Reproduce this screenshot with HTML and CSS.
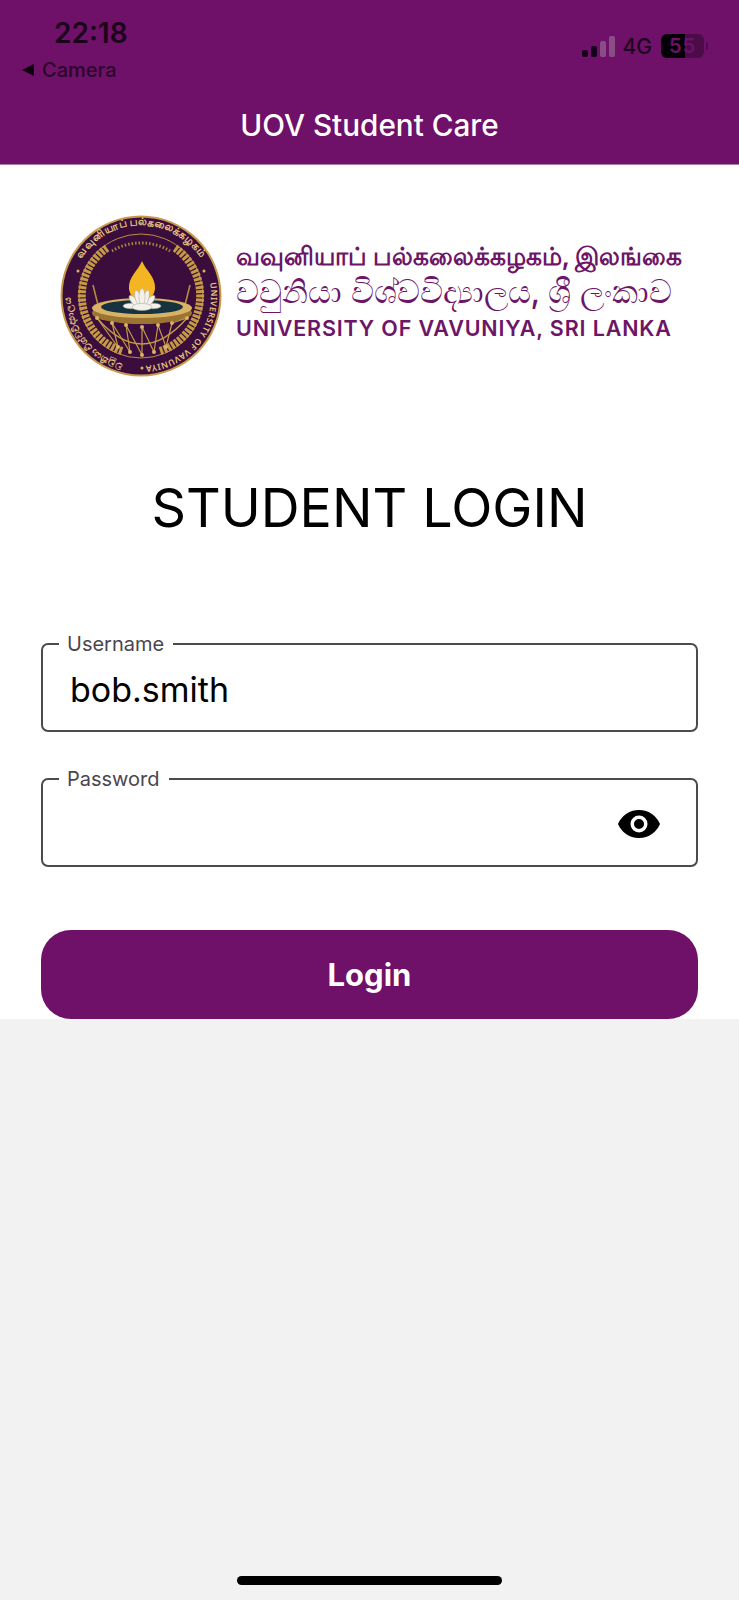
FILE: index.html
```html
<!DOCTYPE html>
<html lang="en">
<head>
<meta charset="utf-8">
<title>UOV Student Care</title>
<link rel="stylesheet" href="styles.css">
</head>
<body>
<header class="app-header">
  <div class="status-bar">
    <div class="status-left">
      <div class="clock">22:18</div>
      <div class="back-link"><span class="back-arrow"></span><span>Camera</span></div>
    </div>
    <div class="status-right">
      <span class="signal"><i class="bar bar-1"></i><i class="bar bar-2"></i><i class="bar bar-3"></i><i class="bar bar-4"></i></span>
      <span class="network">4G</span>
      <span class="battery"><span class="battery-level">55</span></span>
      <span class="battery-cap"></span>
    </div>
  </div>
  <h1 class="app-title">UOV Student Care</h1>
</header>
<main class="login">
  <div class="brand">
    <svg class="seal" viewBox="0 0 162 162" aria-hidden="true">
      <defs>
        <path id="ring-top" d="M 15 57 A 70 70 0 0 1 147 57"/>
        <path id="ring-right" d="M 149 64 A 70 70 0 0 1 81 151"/>
        <path id="ring-left" d="M 81 151 A 70 70 0 0 1 13 64"/>
      </defs>
      <circle cx="81" cy="81" r="80.500" fill="#c89a4b"/>
      <circle cx="81" cy="81" r="78.500" fill="#3a0d3d"/>
      <circle cx="81" cy="81" r="62" fill="none" stroke="#b98f45" stroke-width="1"/>
      <text class="seal-text"><textPath href="#ring-top" startOffset="50%" text-anchor="middle">வவுனியாப் பல்கலைக்கழகம்</textPath></text>
      <text class="seal-text seal-latin"><textPath href="#ring-right" startOffset="50%" text-anchor="middle">UNIVERSITY OF VAVUNIYA</textPath></text>
      <text class="seal-text seal-sinhala"><textPath href="#ring-left" startOffset="50%" text-anchor="middle">වවුනියා විශ්වවිද්‍යාලය</textPath></text>
      <circle cx="18" cy="56" r="1.500" fill="#d9b45f"/><circle cx="144" cy="56" r="1.500" fill="#d9b45f"/><circle cx="82" cy="153" r="1.500" fill="#d9b45f"/>
      <path d="M 52 36 A 56 56 0 0 1 110 36" fill="none" stroke="#a9853f" stroke-width="3" stroke-dasharray="1.500 2"/>
      <path d="M 47 33 A 58 58 0 0 0 62 136" fill="none" stroke="#c49a45" stroke-width="8" stroke-dasharray="3 1.200"/>
      <path d="M 115 33 A 58 58 0 0 1 100 136" fill="none" stroke="#c49a45" stroke-width="8" stroke-dasharray="3 1.200"/>
      <path d="M 33 70 L 38 90 M 130 70 L 125 90" stroke="#b58a3c" stroke-width="1.600"/>
      <path d="M 82 46 C 78 56 68 62 69 74 C 70 82 76 86 82 86 C 88 86 94 82 95 74 C 96 62 86 56 82 46 Z" fill="#f3b521"/>
      <ellipse cx="82" cy="98" rx="50" ry="11" fill="#9c7431"/>
      <ellipse cx="82" cy="93" rx="50" ry="10" fill="#d7b267"/>
      <ellipse cx="82" cy="92" rx="41" ry="7" fill="#16343f"/>
      <g fill="#f4f1ea" stroke="#a7a59c" stroke-width=".5">
        <ellipse cx="71" cy="91" rx="8" ry="2.800"/>
        <ellipse cx="93" cy="91" rx="8" ry="2.800"/>
        <ellipse cx="74" cy="86" rx="2.800" ry="7" transform="rotate(-40 74 86)"/>
        <ellipse cx="90" cy="86" rx="2.800" ry="7" transform="rotate(40 90 86)"/>
        <ellipse cx="78" cy="83" rx="2.800" ry="8" transform="rotate(-15 78 83)"/>
        <ellipse cx="86" cy="83" rx="2.800" ry="8" transform="rotate(15 86 83)"/>
        <ellipse cx="82" cy="82" rx="3" ry="8.500"/>
        <ellipse cx="82" cy="92" rx="10" ry="3.500"/>
      </g>
      <path d="M 37 103 Q 82 155 127 103" fill="none" stroke="#c49a45" stroke-width="1.400"/>
      <polyline points="37,103 58,132 52,108 70,137 66,110 82,140 82,112 94,137 98,110 106,132 112,108 127,103" fill="none" stroke="#c49a45" stroke-width="1.200"/>
      <g fill="#d7b267">
        <circle cx="37" cy="103" r="2"/><circle cx="52" cy="108" r="2"/><circle cx="66" cy="110" r="2"/><circle cx="82" cy="112" r="2"/><circle cx="98" cy="110" r="2"/><circle cx="112" cy="108" r="2"/><circle cx="127" cy="103" r="2"/>
        <circle cx="58" cy="132" r="2"/><circle cx="70" cy="137" r="2"/><circle cx="82" cy="140" r="2"/><circle cx="94" cy="137" r="2"/><circle cx="106" cy="132" r="2"/>
      </g>
    </svg>
    <div class="brand-names">
      <div class="brand-line brand-tamil">வவுனியாப் பல்கலைக்கழகம், இலங்கை</div>
      <div class="brand-line brand-sinhala">වවුනියා විශ්වවිද්‍යාලය, ශ්‍රී ලංකාව</div>
      <div class="brand-line brand-english">UNIVERSITY OF VAVUNIYA, SRI LANKA</div>
    </div>
  </div>
  <h2 class="login-title">STUDENT LOGIN</h2>
  <form class="login-form">
    <fieldset class="field field-username">
      <legend class="field-label">Username</legend>
      <span class="field-value">bob.smith</span>
    </fieldset>
    <fieldset class="field">
      <legend class="field-label">Password</legend>
      <span class="field-value"></span>
      <svg class="eye" viewBox="0 0 44 30" aria-hidden="true">
        <path fill-rule="evenodd" d="M22 1C12 1 4.500 7 1 15c3.500 8 11 14 21 14s17.500-6 21-14C39.500 7 32 1 22 1Zm0 5.500a8.500 8.500 0 1 1 0 17a8.500 8.500 0 0 1 0-17Zm0 3.500a5 5 0 1 0 0 10a5 5 0 0 0 0-10Z"/>
      </svg>
    </fieldset>
    <button class="login-button" type="button">Login</button>
  </form>
</main>
<footer class="home-area"><div class="home-bar"></div></footer>
</body>
</html>
```
FILE: styles.css
```css
* { box-sizing: border-box; }
html, body { margin: 0; padding: 0; }
body {
  width: 739px;
  height: 1600px;
  display: flex;
  flex-direction: column;
  background: #f2f2f2;
  font-family: Inter, "Noto Sans", "Liberation Sans", sans-serif;
  color: #000;
  overflow: hidden;
}
.app-header {
  height: 165px;
  background: #6f1069;
  border-bottom: 1px solid #a880a5;
  display: flex;
  flex-direction: column;
}
.status-bar {
  display: flex;
  justify-content: space-between;
  padding: 16px 31px 0 22px;
  color: #1a0419;
}
.clock {
  font-size: 28px;
  font-weight: 600;
  line-height: 34px;
  margin-left: 32px;
}
.back-link {
  display: flex;
  align-items: center;
  gap: 8px;
  font-size: 20px;
  font-weight: 500;
  line-height: 24px;
  margin-top: 8px;
  color: #2a0829;
}
.back-arrow {
  width: 0;
  height: 0;
  border-style: solid;
  border-width: 6px 12px 6px 0;
  border-color: transparent #0d020c transparent transparent;
}
.status-right {
  display: flex;
  align-items: center;
  height: 24px;
  margin-top: 18px;
}
.signal {
  display: flex;
  align-items: flex-end;
  gap: 3px;
  height: 22px;
  margin-right: 8px;
}
.bar { display: block; width: 6px; border-radius: 2px; background: #14031a; }
.bar-1 { height: 7px; }
.bar-2 { height: 11px; }
.bar-3 { height: 16px; background: #8a4d86; }
.bar-4 { height: 21px; background: #8a4d86; }
.network { font-size: 21px; font-weight: 500; color: #1f0620; margin-right: 9px; }
.battery {
  width: 43px;
  height: 24px;
  border-radius: 6px;
  background: linear-gradient(90deg, #050005 0 56%, #4c0c49 56% 100%);
  display: block;
  text-align: center;
}
.battery-level {
  font-size: 20px;
  font-weight: 600;
  line-height: 24px;
  letter-spacing: 1px;
  color: #6f1069;
}
.battery-cap { width: 2px; height: 8px; margin-left: 2px; background: #4c0c49; border-radius: 0 2px 2px 0; }
.app-title {
  margin: 0;
  padding-top: 25px;
  text-align: center;
  font-size: 29.700px;
  font-weight: 500;
  line-height: 36px;
  color: #fff;
}
.login {
  height: 854px;
  background: #fff;
  padding: 50px 41px 0;
  display: flex;
  flex-direction: column;
}
.brand {
  display: flex;
  align-items: center;
  gap: 14px;
  padding-left: 19px;
}
.seal { width: 162px; height: 162px; flex: none; }
.seal-text { font-size: 10.500px; font-weight: 600; fill: #e6c77c; font-family: "Noto Sans", sans-serif; }
.seal-latin { font-size: 8.500px; letter-spacing: .5px; }
.seal-sinhala { font-size: 9.500px; }
.brand-names { display: flex; flex-direction: column; color: #6d1566; padding-bottom: 8px; }
.brand-line { white-space: nowrap; }
.brand-tamil { font-size: 24.500px; font-weight: 700; line-height: 34px; }
.brand-sinhala { font-size: 32px; font-weight: 500; line-height: 37px; }
.brand-english { font-size: 21.500px; font-weight: 600; letter-spacing: .85px; line-height: 36px; }
.login-title {
  margin: 97px 0 0;
  text-align: center;
  font-size: 53.800px;
  font-weight: 400;
  line-height: 68px;
}
.login-form { display: flex; flex-direction: column; margin-top: 92px; }
.field {
  position: relative;
  margin: 0 0 36px;
  padding: 0;
  height: 98px;
  min-width: 0;
  border: 2px solid #4b4b4b;
  border-radius: 7px;
  display: block;
}
.field-username { margin-bottom: 37px; }
.field-label {
  margin-left: 16px;
  padding: 0 9px 0 8px;
  font-size: 20px;
  line-height: 20px;
  color: #4a4550;
}
.field-value {
  display: block;
  font-size: 34px;
  line-height: 44px;
  margin-top: 14px;
  padding-left: 27px;
}
.eye { position: absolute; right: 35px; top: 20px; width: 44px; height: 30px; }
.login-button {
  margin-top: 27px;
  height: 89px;
  border: 0;
  border-radius: 30px;
  background: #6f1069;
  color: #fff;
  font-family: inherit;
  font-size: 31px;
  font-weight: 700;
}
.home-area { flex: 1; display: flex; align-items: flex-end; justify-content: center; padding-bottom: 15px; }
.home-bar { width: 265px; height: 9px; border-radius: 5px; background: #000; }
```
